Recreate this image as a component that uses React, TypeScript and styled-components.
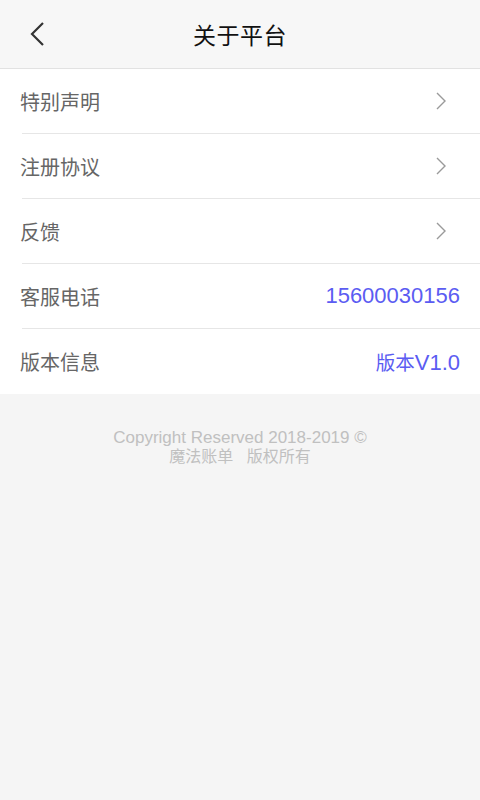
import React from 'react';
import styled, { createGlobalStyle } from 'styled-components';

const GlobalStyle = createGlobalStyle`
  html, body {
    margin: 0;
    padding: 0;
    background: #f5f5f5;
    font-family: "Noto Sans CJK SC", "Noto Sans", sans-serif;
  }
`;

const Page = styled.div`
  width: 480px;
  min-height: 800px;
  background: #f5f5f5;
`;

const Header = styled.div`
  position: relative;
  height: 68px;
  background: #f7f7f7;
  border-bottom: 1px solid #e2e2e2;
  display: flex;
  align-items: center;
  justify-content: center;
`;

const BackButton = styled.div`
  position: absolute;
  left: 26px;
  top: 20px;
  width: 24px;
  height: 28px;
`;

const Title = styled.div`
  font-size: 23px;
  color: #111;
  letter-spacing: 0.5px;
`;

const List = styled.div`
  background: #fff;
  padding-left: 22px;
`;

const Row = styled.div<{ last?: boolean }>`
  display: flex;
  align-items: center;
  justify-content: space-between;
  padding-right: 20px;
  border-bottom: ${({ last }) => (last ? 'none' : '1px solid #e6e6e6')};
  height: ${({ last }) => (last ? '65px' : '64px')};
`;

const Label = styled.span`
  font-size: 20px;
  color: #666;
  margin-left: -2px;
`;

const Value = styled.span`
  font-size: 22px;
  color: #5b5cf2;
  font-family: "Liberation Sans", "Noto Sans CJK SC", sans-serif;
`;

const ValueCjk = styled.span`
  font-size: 19.5px;
  font-family: "Noto Sans CJK SC", sans-serif;
`;

const ChevronBox = styled.span`
  display: flex;
  margin-right: 12px;
`;

const Footer = styled.div`
  padding-top: 34px;
  text-align: center;
  font-family: "Liberation Sans", "Noto Sans CJK SC", sans-serif;
  font-size: 17px;
  color: #c0c0c0;
`;

const FooterLine = styled.div`
  line-height: 19px;
`;

const FooterCjk = styled(FooterLine)`
  font-size: 16px;
`;

const Chevron = () => (
  <svg width="14" height="22" viewBox="0 0 14 22">
    <polyline points="3,3 11,11 3,19" fill="none" stroke="#9a9a9a" strokeWidth="1.4" />
  </svg>
);

const BackIcon = () => (
  <svg width="24" height="28" viewBox="0 0 24 28">
    <polyline points="17,3 6,14 17,25" fill="none" stroke="#333" strokeWidth="2.2" />
  </svg>
);

const renderValue = (value: string) => {
  const m = value.match(/^([^\x00-\x7f]*)(.*)$/);
  if (!m) return value;
  return (
    <>
      {m[1] && <ValueCjk>{m[1]}</ValueCjk>}
      {m[2]}
    </>
  );
};

const items: { label: string; value?: string }[] = [
  { label: '特别声明' },
  { label: '注册协议' },
  { label: '反馈' },
  { label: '客服电话', value: '15600030156' },
  { label: '版本信息', value: '版本V1.0' },
];

export default function App() {
  return (
    <Page>
      <GlobalStyle />
      <Header>
        <BackButton>
          <BackIcon />
        </BackButton>
        <Title>关于平台</Title>
      </Header>
      <List>
        {items.map((item, i) => (
          <Row key={item.label} last={i === items.length - 1}>
            <Label>{item.label}</Label>
            {item.value ? (
              <Value>{renderValue(item.value)}</Value>
            ) : (
              <ChevronBox>
                <Chevron />
              </ChevronBox>
            )}
          </Row>
        ))}
      </List>
      <Footer>
        <FooterLine>Copyright Reserved 2018-2019 ©</FooterLine>
        <FooterCjk>魔法账单&nbsp;&nbsp;&nbsp;版权所有</FooterCjk>
      </Footer>
    </Page>
  );
}
